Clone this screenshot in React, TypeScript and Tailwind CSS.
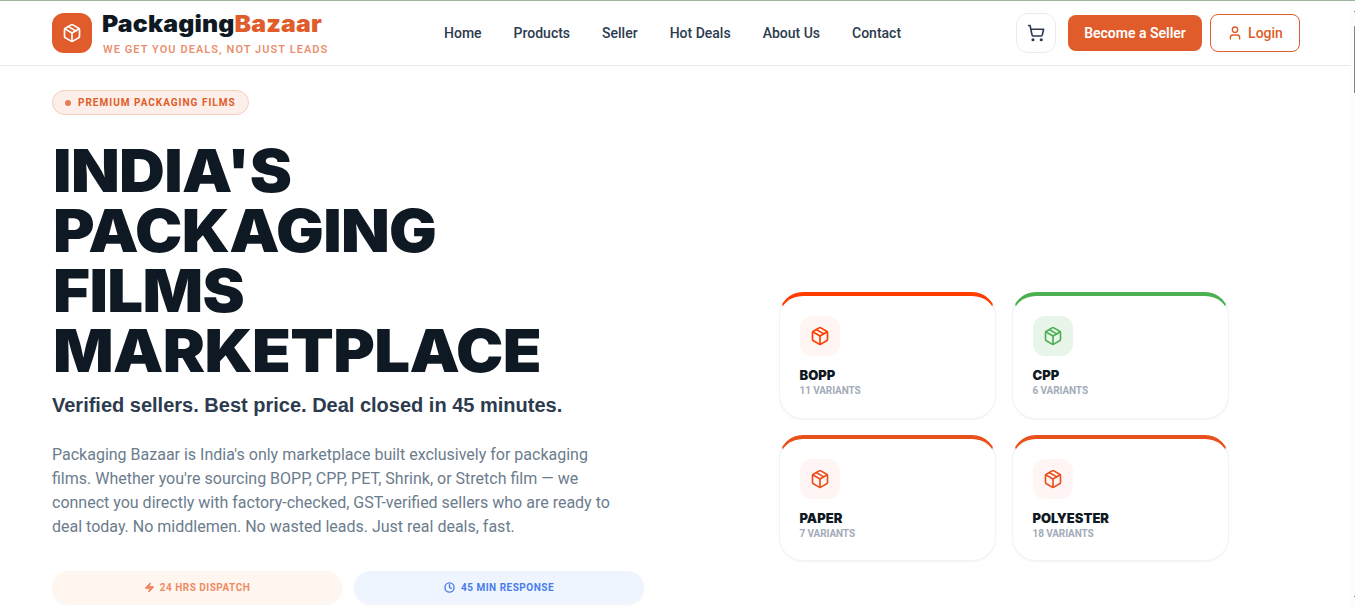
import React from 'react';
import { Clock, Package, ShoppingCart, User, Zap } from 'lucide-react';
interface Category {
  name: string;
  variants: number;
  border: string;
  iconBox: string;
}
const navLinks = ['Home', 'Products', 'Seller', 'Hot Deals', 'About Us', 'Contact'];
const headline = ["INDIA'S", 'PACKAGING', 'FILMS', 'MARKETPLACE'];
const categories: Category[] = [{
  name: 'BOPP',
  variants: 11,
  border: 'border-t-[#ff3d00]',
  iconBox: 'bg-[#fff5f2] text-[#ff3d00]'
}, {
  name: 'CPP',
  variants: 6,
  border: 'border-t-[#4caf50]',
  iconBox: 'bg-[#e8f5e9] text-[#4caf50]'
}, {
  name: 'PAPER',
  variants: 7,
  border: 'border-t-[#e8501c]',
  iconBox: 'bg-[#fff5f4] text-[#e8501c]'
}, {
  name: 'POLYESTER',
  variants: 18,
  border: 'border-t-[#e8501c]',
  iconBox: 'bg-[#fff5f4] text-[#e8501c]'
}];
const Header = () => {
  return <header className="h-[66px] shrink-0 flex items-start border-t border-t-[#9db39d] border-b border-b-[#ebebeb] pl-[52px] pr-[51px] pt-3">
      <div className="flex w-[392px] gap-[10px]">
        <div className="w-10 h-10 rounded-xl bg-[#e05c2a] flex items-center justify-center">
          <Package className="w-5 h-5 text-white" />
        </div>
        <div>
          <div className="origin-left scale-x-[1.08] font-[Inter] font-black text-[23px] leading-[22px] tracking-[0.15px] whitespace-nowrap text-[#0f1923]">
            Packaging<span className="text-[#e05c2a]">Bazaar</span>
          </div>
          <div className="mt-2 ml-px text-[11px] leading-[14px] font-semibold tracking-[1.06px] whitespace-nowrap text-[#e05c2a]/70">
            WE GET YOU DEALS, NOT JUST LEADS
          </div>
        </div>
      </div>
      <nav className="flex items-center gap-8 h-10 text-sm font-medium text-[#2d3b4e]">
        {navLinks.map(link => <a key={link} href="#" className="whitespace-nowrap">{link}</a>)}
      </nav>
      <div className="ml-auto flex h-10 items-center">
        <button className="w-10 h-10 mr-3 rounded-xl border border-[#ebebeb] flex items-center justify-center text-[#2d3b4e]">
          <ShoppingCart className="w-[18px] h-[18px]" strokeWidth={2.2} />
        </button>
        <button className="w-[134px] h-9 mr-2 rounded-lg bg-[#e05c2a] text-white text-sm font-semibold pb-px">
          Become a Seller
        </button>
        <button className="w-[90px] h-[38px] rounded-lg border border-[#e05c2a] text-[#e05c2a] text-sm font-medium flex items-center justify-center gap-[5px]">
          <User className="w-4 h-4" />
          <span className="pb-px">Login</span>
        </button>
      </div>
    </header>;
};
const App = () => {
  return <div className="flex h-[608px] overflow-hidden bg-white font-[Roboto,sans-serif]">
      <div className="w-[1351px] flex flex-col">
        <Header />
        <main className="flex pl-[52px]">
          <section className="w-[592px] pt-6">
            <div className="w-[197px] h-[25px] rounded-full border border-[#f6cdbd] bg-[#fceee9] flex items-center pl-3 gap-[7px]">
              <span className="w-[6px] h-[6px] rounded-full bg-[#e77d55]"></span>
              <span className="text-[10px] font-bold tracking-[1px] whitespace-nowrap text-[#e05c2a]">PREMIUM PACKAGING FILMS</span>
            </div>
            <h1 className="mt-[26px] pl-px origin-left scale-x-[1.075] font-[Inter] font-black text-[59px] leading-[60px] tracking-[-0.6px] text-[#0f1923]">
              {headline.map(line => <span key={line} className="block whitespace-nowrap">{line}</span>)}
            </h1>
            <p className="mt-[10px] font-['Liberation_Sans'] font-bold text-xl leading-7 whitespace-nowrap text-[#2d3b4e]">
              Verified sellers. Best price. Deal closed in 45 minutes.
            </p>
            <p className="mt-6 w-[576px] text-base leading-6 text-[#6b7c8d]">
              Packaging Bazaar is India's only marketplace built exclusively for packaging
              films. Whether you're sourcing BOPP, CPP, PET, Shrink, or Stretch film — we
              connect you directly with factory-checked, GST-verified sellers who are ready to
              deal today. No middlemen. No wasted leads. Just real deals, fast.
            </p>
            <div className="mt-8 grid grid-cols-2 gap-3 text-[10px] font-bold tracking-[0.5px]">
              <div className="h-[33px] rounded-full bg-[#fff7ef] text-[#f08a63] shadow-xs flex items-center justify-center gap-[5px]">
                <Zap className="w-[11px] h-[11px]" fill="currentColor" />
                24 HRS DISPATCH
              </div>
              <div className="h-[33px] rounded-full bg-[#eef5ff] text-[#4b7cec] shadow-xs flex items-center justify-center gap-[6px]">
                <Clock className="w-[11px] h-[11px]" strokeWidth={3} />
                45 MIN RESPONSE
              </div>
            </div>
          </section>
          <section className="ml-[135px] mt-[226px] grid grid-cols-[217px_217px] auto-rows-[126.5px] gap-4 h-[270px]">
            {categories.map(category => <div key={category.name} className={`rounded-3xl border border-[#f3f4f6] border-t-4 bg-white p-5 shadow-xs ${category.border}`}>
                <div className={`w-10 h-10 rounded-xl flex items-center justify-center ${category.iconBox}`}>
                  <Package className="w-5 h-5" />
                </div>
                <h3 className="mt-[11px] -ml-[0.5px] font-[Inter] font-black text-[13px] leading-4 text-[#0f1923]">{category.name}</h3>
                <p className="-ml-[0.5px] text-[10px] leading-[15px] font-bold tracking-[-0.1px] text-[#a3abb9]">{category.variants} VARIANTS</p>
              </div>)}
          </section>
        </main>
      </div>
      <div className="w-1 flex flex-col items-end bg-[#fcfcfc] border-t border-t-[#9db39d]">
        <div className="w-px h-px mt-[10px] bg-[#858585]"></div>
        <div className="w-px h-[67px] mt-[14px] bg-[#858585]"></div>
        <div className="w-px h-px mt-[503px] bg-[#858585]"></div>
      </div>
    </div>;
};
export default App;
